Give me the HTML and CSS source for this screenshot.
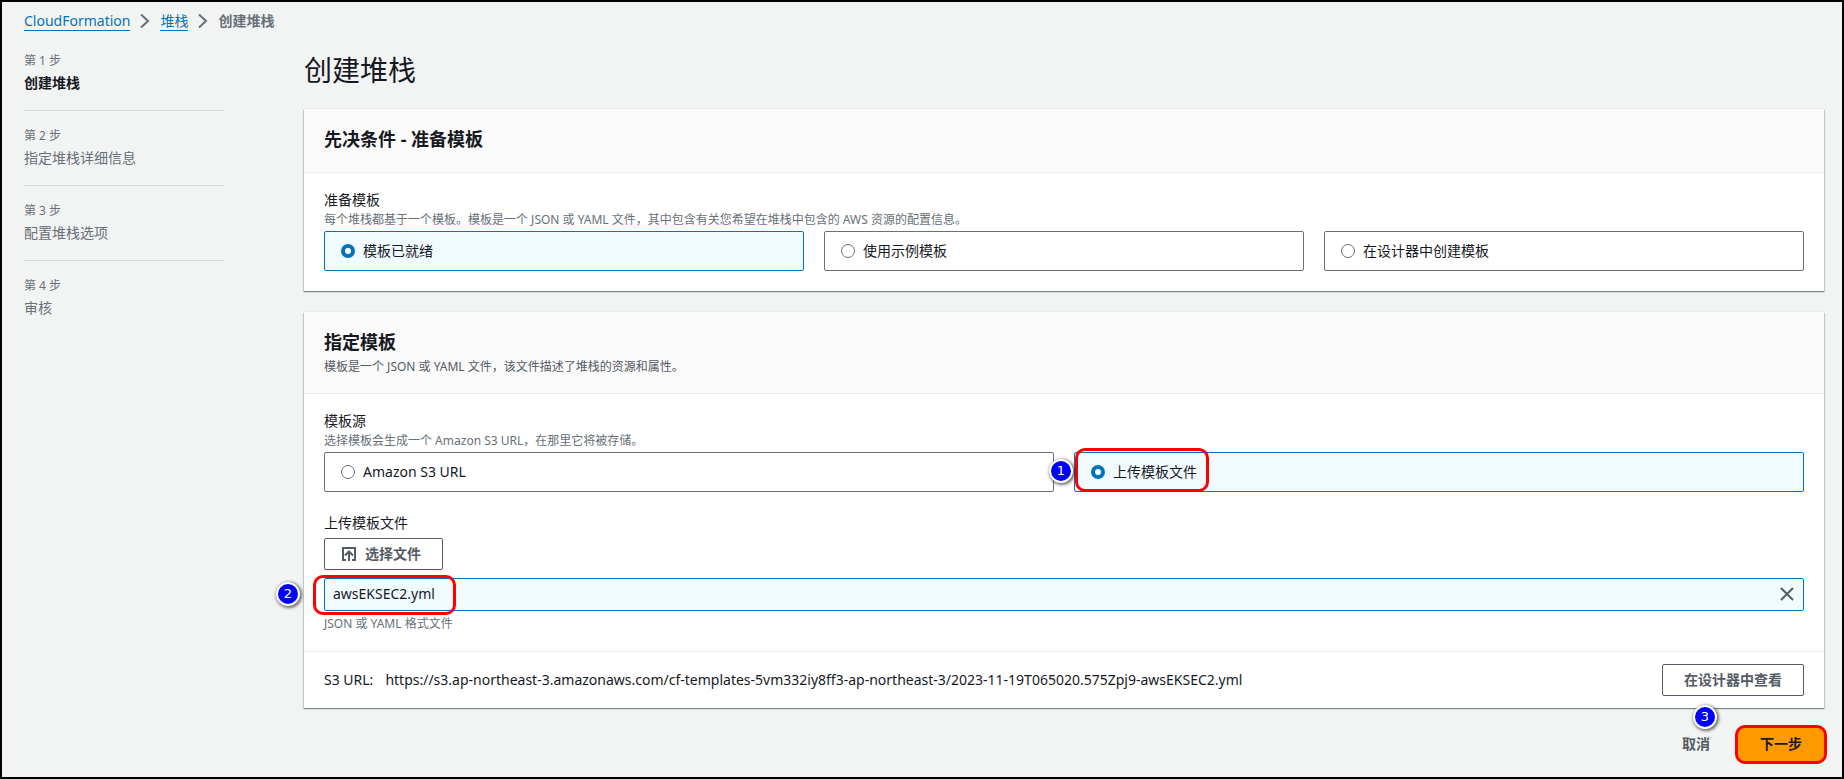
FILE: index.html
```html
<!DOCTYPE html>
<html lang="zh-CN">
<head>
<meta charset="utf-8">
<title>创建堆栈</title>
<link rel="stylesheet" href="styles.css">
</head>
<body>
<div class="page">
  <nav class="breadcrumb" aria-label="导航路径">
    <a href="#">CloudFormation</a>
    <svg class="chevron" viewBox="0 0 10 16" aria-hidden="true"><path d="M1 1.500l7 6.500-7 6.500"/></svg>
    <a href="#">堆栈</a>
    <svg class="chevron" viewBox="0 0 10 16" aria-hidden="true"><path d="M1 1.500l7 6.500-7 6.500"/></svg>
    <span class="current">创建堆栈</span>
  </nav>
  <div class="layout">
    <ol class="steps">
      <li class="step active"><span class="step-no">第 1 步</span><span class="step-name">创建堆栈</span></li>
      <li class="step"><span class="step-no">第 2 步</span><span class="step-name">指定堆栈详细信息</span></li>
      <li class="step"><span class="step-no">第 3 步</span><span class="step-name">配置堆栈选项</span></li>
      <li class="step"><span class="step-no">第 4 步</span><span class="step-name">审核</span></li>
    </ol>
    <main class="main">
      <h1>创建堆栈</h1>
      <section class="card">
        <header class="card-head"><h2>先决条件 - 准备模板</h2></header>
        <div class="card-body" role="radiogroup" aria-labelledby="prep">
          <div class="label" id="prep">准备模板</div>
          <div class="hint">每个堆栈都基于一个模板。模板是一个 JSON 或 YAML 文件，其中包含有关您希望在堆栈中包含的 AWS 资源的配置信息。</div>
          <div class="tiles">
            <label class="tile"><input type="radio" name="prep" checked>模板已就绪</label>
            <label class="tile"><input type="radio" name="prep">使用示例模板</label>
            <label class="tile"><input type="radio" name="prep">在设计器中创建模板</label>
          </div>
        </div>
      </section>
      <section class="card">
        <header class="card-head">
          <h2>指定模板</h2>
          <p>模板是一个 JSON 或 YAML 文件，该文件描述了堆栈的资源和属性。</p>
        </header>
        <div class="card-body">
          <div role="radiogroup" aria-labelledby="source">
            <div class="label" id="source">模板源</div>
            <div class="hint">选择模板会生成一个 Amazon S3 URL，在那里它将被存储。</div>
            <div class="tiles">
              <label class="tile"><input type="radio" name="source">Amazon S3 URL</label>
              <label class="tile"><input type="radio" name="source" checked>上传模板文件<span class="mark mark-tile"></span><span class="badge badge-tile">1</span></label>
            </div>
          </div>
          <div class="upload">
            <div class="label">上传模板文件</div>
            <button class="btn choose" type="button">
              <svg viewBox="0 0 14 14" aria-hidden="true"><path d="M4 13H1V1h12v12h-3M7 14V5M3 8.500L7 4.500l4 4"/></svg>选择文件
            </button>
            <div class="file">
              <span>awsEKSEC2.yml</span>
              <button class="remove" type="button" aria-label="删除文件"><svg viewBox="0 0 16 16" aria-hidden="true"><path d="M2 2l12 12M14 2L2 14"/></svg></button>
              <span class="mark mark-file"></span><span class="badge badge-file">2</span>
            </div>
            <div class="constraint">JSON 或 YAML 格式文件</div>
          </div>
        </div>
        <footer class="card-foot">
          <span class="url-label">S3 URL:</span>
          <span class="url">https://s3.ap-northeast-3.amazonaws.com/cf-templates-5vm332iy8ff3-ap-northeast-3/2023-11-19T065020.575Zpj9-awsEKSEC2.yml</span>
          <button class="btn" type="button">在设计器中查看</button>
        </footer>
      </section>
      <div class="actions">
        <button class="cancel" type="button">取消<span class="badge badge-cancel">3</span></button>
        <button class="next" type="button">下一步<span class="mark mark-next"></span></button>
      </div>
    </main>
  </div>
</div>
</body>
</html>
```
FILE: styles.css
```css
* { box-sizing: border-box; }
body {
  margin: 0;
  background: #f2f3f3;
  color: #16191f;
  font: 14px/20px "Noto Sans", "Noto Sans CJK SC", sans-serif;
}
button { font: inherit; cursor: pointer; }
h1, h2, p, ol { margin: 0; padding: 0; font-weight: 400; }
svg { fill: none; stroke: currentColor; stroke-width: 2; }

.page {
  min-height: 100vh;
  border: 2px solid #000;
  padding: 9px 18px 12px 22px;
}
.breadcrumb { display: flex; align-items: center; gap: 10px; color: #687078; }
.breadcrumb a { color: #0073bb; text-decoration: none; border-bottom: 1px solid #0073bb; line-height: 18px; }
.chevron { width: 10px; height: 16px; }
.current { font-weight: 700; }

.layout { display: flex; gap: 80px; margin-top: 19px; }
.steps { width: 200px; flex: none; list-style: none; }
.step { display: grid; line-height: 22px; color: #687078; padding-bottom: 16px; }
.step + .step { border-top: 1px solid #d5dbdb; padding-top: 14px; }
.step-no { font-size: 12px; }
.active .step-name { color: #16191f; font-weight: 700; }

.main { flex: 1; min-width: 0; }
h1 { font-size: 28px; line-height: 36px; margin: 2px 0 21px; }
.card {
  background: #fff;
  box-shadow: 0 1px 1px 0 rgba(0, 28, 36, .3), 1px 1px 1px 0 rgba(0, 28, 36, .15), -1px 1px 1px 0 rgba(0, 28, 36, .15), 0 -1px 0 0 #eaeded;
}
.card + .card { margin-top: 21px; }
.card-head { background: #fafafa; border-bottom: 1px solid #eaeded; padding: 19px 20px 17px; }
.card-head h2 { font-size: 18px; line-height: 22px; font-weight: 700; margin-bottom: 5px; }
.card-head p { font-size: 12px; line-height: 18px; color: #545b64; }
.card-body { padding: 17px 20px 20px; }
.hint, .constraint { font-size: 12px; color: #687078; }
.tiles { display: grid; grid-auto-flow: column; grid-auto-columns: 1fr; gap: 20px; margin-top: 1px; }
.tile {
  position: relative;
  display: flex;
  align-items: center;
  gap: 8px;
  height: 40px;
  padding: 0 16px;
  border: 1px solid #687078;
  border-radius: 2px;
}
.tile:has(input:checked) { border-color: #0073bb; background: #f1faff; }
.tile input { appearance: none; width: 14px; height: 14px; margin: 0; border: 1px solid #687078; border-radius: 50%; background: #fff; }
.tile input:checked { border: 4px solid #0073bb; }

.upload { margin-top: 21px; margin-bottom: -3px; }
.btn {
  display: flex;
  align-items: center;
  gap: 9px;
  height: 32px;
  padding: 0 21px;
  border: 1px solid #545b64;
  border-radius: 2px;
  background: #fff;
  color: #545b64;
  font-weight: 700;
}
.choose { margin-top: 5px; padding-left: 17px; }
.btn svg { width: 14px; height: 14px; }
.remove svg { width: 16px; height: 16px; }
.file {
  position: relative;
  display: flex;
  align-items: center;
  justify-content: space-between;
  height: 33px;
  margin: 8px 0 3px;
  padding: 0 8px 1px;
  border: 1px solid #0073bb;
  border-radius: 2px;
  background: #f1faff;
}
.remove { display: flex; padding: 0; border: 0; background: none; color: #545b64; }
.card-foot { display: flex; align-items: center; gap: 12px; padding: 12px 20px; border-top: 1px solid #eaeded; }
.url { flex: 1; }

.actions { display: flex; justify-content: flex-end; gap: 28px; margin-top: 19px; }
.cancel { position: relative; padding: 0; border: 0; background: none; color: #545b64; font-weight: 700; }
.next { position: relative; width: 86px; height: 34px; padding: 0; border: 0; border-radius: 6px; background: #ff9900; color: #16191f; font-weight: 700; }

.mark { position: absolute; border: 3px solid #f00; border-radius: 10px; pointer-events: none; }
.mark-tile { left: 0; top: -5px; width: 134px; height: 44px; }
.mark-file { left: -12px; top: -4px; width: 143px; height: 40px; }
.mark-next { inset: -2px -3px -3px; }
.badge {
  position: absolute;
  width: 24px;
  height: 24px;
  border: 2px solid #fff;
  border-radius: 50%;
  background: #00f;
  box-shadow: 1px 1px 3px 1px rgba(0, 0, 0, .55);
  color: #fff;
  font: 13px/20px "DejaVu Sans", sans-serif;
  text-align: center;
}
.badge-tile { left: -26px; top: 6px; }
.badge-file { left: -49px; top: 3px; }
.badge-cancel { left: 11px; top: -22px; }
```
